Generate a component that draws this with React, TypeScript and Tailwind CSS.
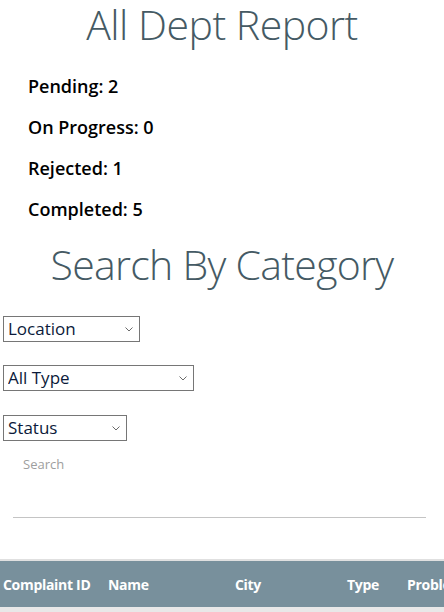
export default function App() {
  return (
    <div
      className="min-h-screen bg-white overflow-hidden"
      style={{ fontFamily: '"Open Sans", "Noto Sans", sans-serif' }}
    >
      {/* Report header */}
      <h1 className="text-center text-[41px] leading-[48px] font-light text-[#455a64] tracking-[-0.5px]">
        All Dept Report
      </h1>

      {/* Counters */}
      <div className="pl-7 pt-[27px] flex flex-col gap-[19px] text-[18px] leading-[22px] font-semibold text-black">
        <p>Pending: 2</p>
        <p>On Progress: 0</p>
        <p>Rejected: 1</p>
        <p>Completed: 5</p>
      </div>

      <h2 className="mt-[20px] text-center text-[41px] leading-[48px] font-light text-[#455a64] tracking-[-0.7px]">
        Search By Category
      </h2>

      {/* Filters */}
      <div className="px-[3px] pt-[28px] flex flex-col items-start">
        <Select width="w-[137px]" options={['Location', 'Jakarta', 'Bandung']} />
        <div className="h-[23px]" />
        <Select width="w-[191px]" options={['All Type', 'Road', 'Water', 'Electricity']} />
        <div className="h-[24px]" />
        <Select width="w-[124px]" options={['Status', 'Pending', 'On Progress', 'Rejected', 'Completed']} />
        <button className="mt-[14px] ml-5 text-[13px] leading-[18px] text-[#9e9e9e] bg-transparent">
          Search
        </button>
      </div>

      <hr className="ml-[13px] mr-[18px] mt-[44px] border-t border-[#c4c4c4]" />

      {/* Table */}
      <div className="mt-[41px] border-t-2 border-[#e0e0e0]">
        <table className="w-[570px] border-collapse text-left">
          <thead>
            <tr className="bg-[#78909c] text-white text-[14px] font-bold tracking-[-0.3px]">
              <th className="h-[46px] pl-[3px] w-[108px] font-bold">Complaint ID</th>
              <th className="w-[127px] font-bold">Name</th>
              <th className="w-[112px] font-bold">City</th>
              <th className="w-[60px] font-bold">Type</th>
              <th className="font-bold">Problem</th>
            </tr>
          </thead>
          <tbody>
            <tr className="bg-[#e8e8e8]">
              <td className="h-[10px]" colSpan={5}></td>
            </tr>
          </tbody>
        </table>
      </div>
    </div>
  );
}

function Select({ width, options }: { width: string; options: string[] }) {
  return (
    <div className={`relative ${width}`}>
      <select
        className="appearance-none w-full h-[26px] border border-[#767676] bg-white text-[17px] leading-[22px] text-[#0b1a3a] rounded-none pl-[4px] pr-5"
        style={{ fontFamily: '"Open Sans", "Noto Sans", sans-serif' }}
      >
        {options.map((o) => (
          <option key={o}>{o}</option>
        ))}
      </select>
      <svg
        className="pointer-events-none absolute right-[7px] top-[11px]"
        width="8"
        height="5"
        viewBox="0 0 8 5"
        fill="none"
      >
        <path d="M0.5 0.5 L4 4 L7.5 0.5" stroke="#6b6b6b" strokeWidth="1" />
      </svg>
    </div>
  );
}
